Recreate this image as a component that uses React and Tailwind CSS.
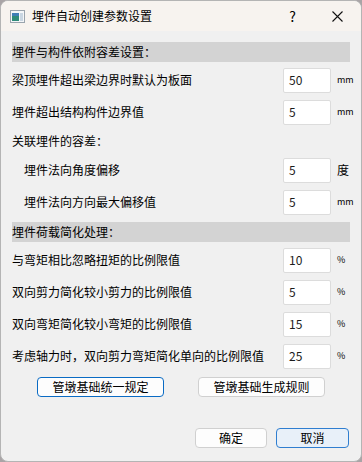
import React from "react";

const font = { fontFamily: '"Noto Sans CJK SC", "Microsoft YaHei", sans-serif' };

function Field({ label, value, unit, indent, small }) {
  return (
    <div className="flex items-center h-[32px]">
      <div className={`flex-1 text-[12px] text-black ${indent ? "pl-[12px]" : ""}`}>{label}</div>
      <div className="w-[48px] h-[25px] bg-white border border-[#dcdcdc] rounded-[2px] flex items-center pl-[5px] text-[12px] text-[#1c1c1c]">
        {value}
      </div>
      <div className={`w-[19px] pl-[6px] text-black ${small ? "text-[9px]" : "text-[12px]"}`}>{unit}</div>
    </div>
  );
}

function Header({ children }) {
  return (
    <div className="h-[20px] bg-[#d3d3d3] flex items-center text-[12px] text-black">{children}</div>
  );
}

export default function App() {
  return (
    <div className="w-[362px] h-[462px] bg-[#a9a4a6]" style={font}>
      <div className="w-full h-full bg-[#f0f0f0] rounded-[8px] border border-[#b4b4b4] overflow-hidden flex flex-col">
        {/* title bar */}
        <div className="h-[30px] bg-[#f7f3ef] flex items-center pl-[9px] shrink-0">
          <svg width="15" height="13" viewBox="0 0 15 13">
            <rect x="0.5" y="0.5" width="14" height="12" fill="#f4f6f8" stroke="#9aa4ad" />
            <rect x="2" y="3" width="7" height="8" fill="#2f8c7a" />
            <rect x="2" y="3" width="7" height="3" fill="#3f7fb6" />
            <rect x="10" y="3" width="3" height="8" fill="#c9d6e2" />
          </svg>
          <span className="ml-[7px] text-[12px] text-black">埋件自动创建参数设置</span>
          <span className="ml-auto mr-[36px] text-[14px] text-black">?</span>
          <svg width="11" height="11" viewBox="0 0 11 11" className="mr-[18px]">
            <path d="M0.5 0.5 L10.5 10.5 M10.5 0.5 L0.5 10.5" stroke="#111" strokeWidth="1.1" />
          </svg>
        </div>

        <div className="px-[11px] pt-[11px] flex flex-col">
          <Header>埋件与构件依附容差设置：</Header>
          <div className="pt-[2px]">
            <Field label="梁顶埋件超出梁边界时默认为板面" value="50" unit="mm" small />
            <Field label="埋件超出结构构件边界值" value="5" unit="mm" small />
            <div className="h-[26px] flex items-center text-[12px] text-black">关联埋件的容差：</div>
            <Field label="埋件法向角度偏移" value="5" unit="度" indent />
            <Field label="埋件法向方向最大偏移值" value="5" unit="mm" indent small />
          </div>
          <div className="mt-[4px]">
            <Header>埋件荷载简化处理：</Header>
          </div>
          <div className="pt-[2px]">
            <Field label="与弯矩相比忽略扭矩的比例限值" value="10" unit="%" small />
            <Field label="双向剪力简化较小剪力的比例限值" value="5" unit="%" small />
            <Field label="双向弯矩简化较小弯矩的比例限值" value="15" unit="%" small />
            <Field label="考虑轴力时，双向剪力弯矩简化单向的比例限值" value="25" unit="%" small />
          </div>

          <div className="flex mt-[5px] h-[20px]">
            <div className="ml-[25px] w-[127px] h-[20px] bg-[#fdfdfd] border border-[#0a6bc4] rounded-[4px] flex items-center justify-center text-[12px] text-black">
              管墩基础统一规定
            </div>
            <div className="ml-[34px] w-[127px] h-[20px] bg-[#fdfdfd] border border-[#d0d0d0] rounded-[4px] flex items-center justify-center text-[12px] text-black">
              管墩基础生成规则
            </div>
          </div>

          <div className="flex justify-end mt-[31px] pr-[1px]">
            <div className="w-[72px] h-[20px] bg-[#fdfdfd] border border-[#d0d0d0] rounded-[4px] flex items-center justify-center text-[12px] text-black">
              确定
            </div>
            <div className="ml-[9px] w-[73px] h-[20px] bg-[#e8f0f9] border border-[#2f7ed0] rounded-[4px] flex items-center justify-center text-[12px] text-black">
              取消
            </div>
          </div>
        </div>
      </div>
    </div>
  );
}
